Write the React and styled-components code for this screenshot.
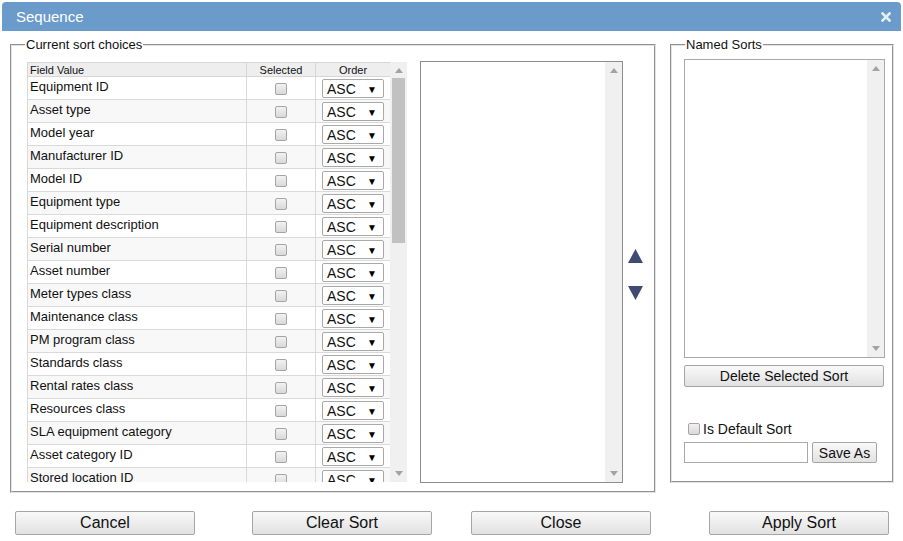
import React from "react";
import styled, { createGlobalStyle } from "styled-components";

const Global = createGlobalStyle`
  html, body { margin: 0; padding: 0; background: #fff; }
  body { font-family: "Liberation Sans", Arial, sans-serif; color: #111; }
  * { box-sizing: border-box; }
`;

const Dialog = styled.div`
  margin: 2px 2px 0 2px;
  width: 899px;
  background: #fff;
`;

const TitleBar = styled.div`
  height: 29px;
  background: #6a9bcb;
  border-radius: 4px 4px 0 0;
  display: flex;
  align-items: center;
  justify-content: space-between;
  padding: 0 10px 0 14px;
`;

const Title = styled.span`
  color: #fff;
  font-size: 15px;
  line-height: 29px;
`;

const CloseIcon = styled.svg`
  width: 10px;
  height: 10px;
`;

const Body = styled.div`
  padding: 6px 7px 0 8px;
`;

const Panels = styled.div`
  display: flex;
  align-items: flex-start;
  gap: 14px;
`;

const Fieldset = styled.fieldset`
  margin: 0;
  border: 2px groove #e4e4e4;
  width: ${(p) => p.$w}px;
  height: ${(p) => p.$h}px;
  padding: ${(p) => p.$pad};
  min-width: 0;
`;

const Legend = styled.legend`
  font-size: 13px;
  line-height: 15px;
  padding: 0 1px;
  margin-left: ${(p) => p.$ml}px;
  color: #111;
`;

const LeftInner = styled.div`
  display: flex;
  align-items: flex-start;
`;

const TableArea = styled.div`
  display: flex;
  height: 420px;
  margin-top: 1px;
`;

const TableClip = styled.div`
  width: 363px;
  height: 420px;
  overflow: hidden;
`;

const Table = styled.table`
  border-collapse: collapse;
  width: 363px;
  table-layout: fixed;
`;

const Th = styled.th`
  font-size: 11px;
  font-weight: normal;
  line-height: 12px;
  height: 14px;
  padding: 0 2px;
  background: #eeeeee;
  border: 1px solid #d6d6d6;
  text-align: ${(p) => p.$align || "center"};
  color: #111;
  width: ${(p) => p.$w}px;
`;

const Tr = styled.tr`
  background: ${(p) => (p.$odd ? "#f8f8f8" : "#fff")};
`;

const Td = styled.td`
  border: 1px solid #d9d9d9;
  height: 23px;
  padding: 0 2px;
  vertical-align: ${(p) => p.$valign || "middle"};
  text-align: ${(p) => p.$align || "left"};
  font-size: 13px;
  line-height: 15px;
`;

const FieldText = styled.div`
  padding: 2px 0 0 0;
  white-space: nowrap;
`;

const Check = styled.span`
  display: inline-block;
  width: 12px;
  height: 12px;
  border: 1px solid #a5a5a5;
  border-radius: 2px;
  background: linear-gradient(#f2f2f2, #d9d9d9);
  vertical-align: middle;
`;

const SelectBox = styled.div`
  width: 62px;
  height: 19px;
  margin-left: 4px;
  margin-top: 1px;
  border: 1px solid #a9a9a9;
  border-radius: 2px;
  background: #fff;
  display: flex;
  align-items: center;
  justify-content: space-between;
  padding: 1px 6px 0 4px;
  font-size: 14px;
  line-height: 17px;
`;

const Caret = styled.span`
  font-size: 10px;
  color: #000;
`;

const Scrollbar = styled.div`
  width: 17px;
  height: ${(p) => p.$h}px;
  background: #f0f0f0;
  display: flex;
  flex-direction: column;
  align-items: center;
  justify-content: space-between;
  position: relative;
  flex-shrink: 0;
`;

const Arrow = styled.svg`
  width: 8px;
  height: 5px;
  margin: ${(p) => (p.$down ? "0 0 6px" : "6px 0 0")};
`;

const Thumb = styled.div`
  position: absolute;
  left: 2px;
  right: 2px;
  top: ${(p) => p.$top}px;
  height: ${(p) => p.$h}px;
  background: #c1c1c1;
`;

const ListBox = styled.div`
  width: ${(p) => p.$w}px;
  height: ${(p) => p.$h}px;
  border: 1px solid ${(p) => p.$border || "#8c8c8c"};
  background: #fff;
  display: flex;
  justify-content: flex-end;
  flex-shrink: 0;
  margin: ${(p) => p.$m || 0};
`;

const MoveCol = styled.div`
  width: 33px;
  height: 422px;
  display: flex;
  flex-direction: column;
  align-items: center;
  justify-content: center;
  gap: 23px;
  padding: 4px 6px 0 0;
`;

const MoveIcon = styled.svg`
  width: 15px;
  height: 14px;
`;

const RightInner = styled.div`
  display: flex;
  flex-direction: column;
  align-items: flex-start;
`;

const Button = styled.button`
  font-family: "Liberation Sans", Arial, sans-serif;
  font-size: ${(p) => p.$fs || 14}px;
  color: #111;
  width: ${(p) => p.$w}px;
  height: ${(p) => p.$h}px;
  border: 1px solid #a6a6a6;
  border-radius: 2px;
  background: linear-gradient(#f9f9f9, #e1e1e1);
  padding: 0;
  margin-left: ${(p) => p.$ml || 0}px;
  margin-top: ${(p) => p.$mt || 0}px;
  flex-shrink: 0;
  cursor: pointer;
`;

const DefaultRow = styled.label`
  display: flex;
  align-items: center;
  gap: 3px;
  font-size: 14px;
  margin: 34px 0 0 4px;
`;

const SaveRow = styled.div`
  display: flex;
  gap: 4px;
  margin-top: 5px;
`;

const TextInput = styled.div`
  width: 124px;
  height: 21px;
  border: 1px solid #a9a9a9;
  background: #fff;
`;

const Footer = styled.div`
  display: flex;
  margin-top: 18px;
  padding-left: 5px;
`;

const fields = [
  "Equipment ID",
  "Asset type",
  "Model year",
  "Manufacturer ID",
  "Model ID",
  "Equipment type",
  "Equipment description",
  "Serial number",
  "Asset number",
  "Meter types class",
  "Maintenance class",
  "PM program class",
  "Standards class",
  "Rental rates class",
  "Resources class",
  "SLA equipment category",
  "Asset category ID",
  "Stored location ID",
];

const UpArrow = () => (
  <Arrow viewBox="0 0 8 5">
    <path d="M0 5 L4 0 L8 5 Z" fill="#a3a3a3" />
  </Arrow>
);
const DownArrow = () => (
  <Arrow viewBox="0 0 8 5" $down>
    <path d="M0 0 L8 0 L4 5 Z" fill="#a3a3a3" />
  </Arrow>
);

export default function App() {
  return (
    <>
      <Global />
      <Dialog>
        <TitleBar>
          <Title>Sequence</Title>
          <CloseIcon viewBox="0 0 10 10">
            <path d="M1.5 1.5 L8.5 8.5 M8.5 1.5 L1.5 8.5" stroke="#e6edf5" strokeWidth="2.6" strokeLinecap="square" />
          </CloseIcon>
        </TitleBar>
        <Body>
          <Panels>
            <Fieldset $w={646} $h={456} $pad="9px 0 0 15px">
              <Legend $ml={-2}>Current sort choices</Legend>
              <LeftInner>
                <TableArea>
                  <TableClip>
                    <Table>
                      <thead>
                        <tr>
                          <Th $w={219} $align="left">Field Value</Th>
                          <Th $w={69}>Selected</Th>
                          <Th $w={75}>Order</Th>
                        </tr>
                      </thead>
                      <tbody>
                        {fields.map((f, i) => (
                          <Tr key={f} $odd={i % 2 === 1}>
                            <Td $valign="top">
                              <FieldText>{f}</FieldText>
                            </Td>
                            <Td $align="center">
                              <Check />
                            </Td>
                            <Td>
                              <SelectBox>
                                <span>ASC</span>
                                <Caret>▼</Caret>
                              </SelectBox>
                            </Td>
                          </Tr>
                        ))}
                      </tbody>
                    </Table>
                  </TableClip>
                  <Scrollbar $h={420}>
                    <UpArrow />
                    <Thumb $top={16} $h={165} />
                    <DownArrow />
                  </Scrollbar>
                </TableArea>
                <ListBox $w={203} $h={422} $m="0 0 0 13px">
                  <Scrollbar $h={420}>
                    <UpArrow />
                    <DownArrow />
                  </Scrollbar>
                </ListBox>
                <MoveCol>
                  <MoveIcon viewBox="0 0 15 14">
                    <path d="M7.5 0 L15 14 L0 14 Z" fill="#3f4b72" />
                  </MoveIcon>
                  <MoveIcon viewBox="0 0 15 14">
                    <path d="M0 0 L15 0 L7.5 14 Z" fill="#3f4b72" />
                  </MoveIcon>
                </MoveCol>
              </LeftInner>
            </Fieldset>
            <Fieldset $w={224} $h={446} $pad="5px 0 0 12px">
              <Legend $ml={1}>Named Sorts</Legend>
              <RightInner>
                <ListBox $w={201} $h={299} $border="#a9a9a9" $m="2px 0 0 0">
                  <Scrollbar $h={297}>
                    <UpArrow />
                    <DownArrow />
                  </Scrollbar>
                </ListBox>
                <Button $w={200} $h={22} $mt={7}>
                  Delete Selected Sort
                </Button>
                <DefaultRow>
                  <Check />
                  Is Default Sort
                </DefaultRow>
                <SaveRow>
                  <TextInput />
                  <Button $w={65} $h={21}>Save As</Button>
                </SaveRow>
              </RightInner>
            </Fieldset>
          </Panels>
          <Footer>
            <Button $w={180} $h={24} $fs={16}>Cancel</Button>
            <Button $w={180} $h={24} $fs={16} $ml={57}>Clear Sort</Button>
            <Button $w={180} $h={24} $fs={16} $ml={39}>Close</Button>
            <Button $w={180} $h={24} $fs={16} $ml={58}>Apply Sort</Button>
          </Footer>
        </Body>
      </Dialog>
    </>
  );
}
